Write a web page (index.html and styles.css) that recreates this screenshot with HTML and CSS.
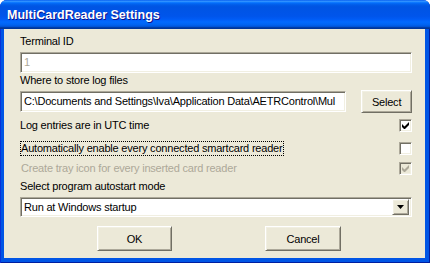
FILE: index.html
```html
<!DOCTYPE html>
<html lang="en">

<head>
    <meta charset="UTF-8">
    <title>MultiCardReader Settings</title>
    <link rel="stylesheet" href="styles.css">
</head>

<body>
    <div class="window">
        <div class="titlebar">
            <span class="title">MultiCardReader Settings</span>
        </div>

        <div class="client">
            <div class="label">Terminal ID</div>
            <div class="field sunken greyed">1</div>

            <div class="label label-gap">Where to store log files</div>
            <div class="path-row">
                <div class="field sunken path">C:\Documents and Settings\Iva\Application Data\AETRControl\Mul</div>
                <button type="button" class="btn raised select-btn">Select</button>
            </div>

            <div class="check-row first">
                <span class="check-text">Log entries are in UTC time</span>
                <span class="checkbox sunken">
                    <svg width="7" height="7" viewBox="0 0 7 7"><path d="M0 2v3l2 2h1l4-4V0L2.5 4.5z" fill="#000"/></svg>
                </span>
            </div>

            <div class="check-row second">
                <span class="check-text focused">Automatically enable every connected smartcard reader</span>
                <span class="checkbox sunken"></span>
            </div>

            <div class="check-row third">
                <span class="check-text disabled">Create tray icon for every inserted card reader</span>
                <span class="checkbox sunken off">
                    <svg width="7" height="7" viewBox="0 0 7 7"><path d="M0 2v3l2 2h1l4-4V0L2.5 4.5z" fill="#aca899"/></svg>
                </span>
            </div>

            <div class="label mode-label">Select program autostart mode</div>
            <div class="combo sunken">
                <span class="combo-text">Run at Windows startup</span>
                <span class="drop raised">
                    <svg width="7" height="4" viewBox="0 0 7 4"><path d="M0 0h7L3.5 4z" fill="#000"/></svg>
                </span>
            </div>

            <div class="buttons">
                <button type="button" class="btn raised dlg-btn">OK</button>
                <button type="button" class="btn raised dlg-btn">Cancel</button>
            </div>
        </div>
    </div>
</body>

</html>
```

FILE: styles.css
```css
/* Basic reset */
* {
    margin: 0;
    padding: 0;
    box-sizing: border-box;
}

body {
    background-color: #ffffff;
    font-family: 'Liberation Sans', Arial, sans-serif;
    font-size: 11px;
    line-height: 13px;
    letter-spacing: -0.2px;
    color: #000000;
    width: 430px;
    height: 263px;
    overflow: hidden;
}

/* Window frame */
.window {
    width: 430px;
    height: 263px;
    display: flex;
    flex-direction: column;
    background-color: #0055e5;
    border-radius: 7px 7px 0 0;
    box-shadow: inset 1px 0 #0831d9, inset -1px -1px #001ea0;
    overflow: hidden;
}

.titlebar {
    height: 29px;
    flex-shrink: 0;
    display: flex;
    align-items: center;
    padding: 1px 0 0 7px;
    background: linear-gradient(to bottom,
        #0058ee 0%, #3593ff 4%, #288eff 6%, #127dff 8%, #036ffc 10%,
        #0262ee 14%, #0057e5 20%, #0054e3 24%, #0055eb 56%, #005bf5 66%,
        #026afe 76%, #0062ef 86%, #0052d6 92%, #0040ab 94%, #003092 100%);
}

.title {
    font-size: 12.5px;
    font-weight: 700;
    letter-spacing: 0;
    color: #ffffff;
    text-shadow: 1px 1px #0f1089;
}

.client {
    flex: 1;
    margin: 0 5px 5px 4px;
    padding: 6px 13px 0 16px;
    background-color: #ece9d8;
    display: flex;
    flex-direction: column;
}

/* 3D edges */
.sunken {
    border: 1px solid;
    border-color: #aca899 #ffffff #ffffff #aca899;
    box-shadow: inset 1px 1px #716f64, inset -1px -1px #f1efe2;
    background-color: #ffffff;
}

.raised {
    border: 1px solid;
    border-color: #ffffff #716f64 #716f64 #ffffff;
    box-shadow: inset 1px 1px #f1efe2, inset -1px -1px #aca899;
    background-color: #ece9d8;
}

.label {
    height: 13px;
    white-space: nowrap;
}

.label-gap {
    margin-top: 1px;
}

.field {
    height: 21px;
    margin-top: 4px;
    padding: 3px 2px 0 3px;
    white-space: nowrap;
    overflow: hidden;
}

.greyed {
    color: #aca899;
}

.path-row {
    display: flex;
    align-items: center;
    margin-top: 3px;
    height: 23px;
}

.path {
    width: 327px;
    margin-top: 0;
}

.btn {
    font-family: 'Liberation Sans', Arial, sans-serif;
    font-size: 11px;
    letter-spacing: -0.2px;
    color: #000000;
    cursor: pointer;
}

.select-btn {
    width: 51px;
    height: 23px;
    margin-left: 15px;
}

/* Checkbox rows */
.check-row {
    display: flex;
    justify-content: space-between;
    align-items: center;
    white-space: nowrap;
}

.check-row.first {
    margin-top: 6px;
    height: 13px;
}

.check-row.second {
    margin-top: 9px;
    height: 15px;
}

.check-row.third {
    margin-top: 5px;
    height: 15px;
}

.check-text {
    border: 1px solid transparent;
    padding: 0 1px 0 0;
}

.check-row.first .check-text {
    border: none;
}

.focused {
    border: 1px dotted #000000;
}

.disabled {
    color: #aca899;
}

.checkbox {
    width: 13px;
    height: 13px;
    display: flex;
    align-items: center;
    justify-content: center;
}

.checkbox.off {
    background-color: #ece9d8;
}

.mode-label {
    margin-top: 4px;
}

/* Combo box */
.combo {
    height: 20px;
    margin-top: 4px;
    display: flex;
    align-items: center;
    justify-content: space-between;
    padding: 2px;
}

.combo-text {
    padding-left: 1px;
}

.drop {
    width: 17px;
    height: 16px;
    display: flex;
    align-items: center;
    justify-content: center;
}

/* Dialog buttons */
.buttons {
    display: flex;
    gap: 93px;
    margin-top: 9px;
    padding-left: 77px;
}

.dlg-btn {
    width: 75px;
    height: 25px;
}

.dlg-btn + .dlg-btn {
    width: 76px;
}
```
